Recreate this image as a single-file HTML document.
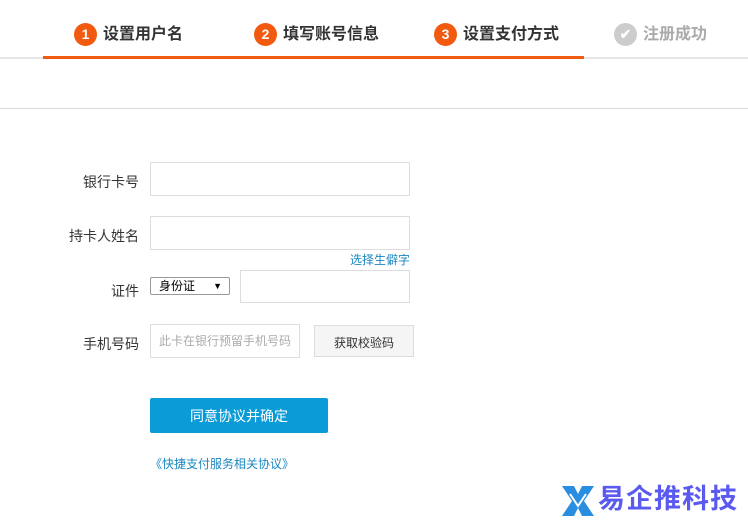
<!DOCTYPE html>
<html><head><meta charset="utf-8"><style>
*{margin:0;padding:0;box-sizing:border-box}
body{width:748px;height:529px;background:#fff;font-family:"Liberation Sans","Microsoft YaHei","Noto Sans CJK SC",sans-serif;position:relative;overflow:hidden;color:#333}
.a{position:absolute}
.step{position:absolute;top:23px;height:24px;font-size:16px;font-weight:bold;line-height:24px;color:#333;white-space:nowrap}
.c{display:inline-block;width:23px;height:23px;border-radius:50%;background:#f25a0f;color:#fff;font-size:14px;text-align:center;line-height:23px;vertical-align:top;margin-right:6px}
.lbl{position:absolute;font-size:14px;color:#333;text-align:right;width:90px;left:49px}
.in{position:absolute;border:1px solid #ddd;background:#fff}
</style></head><body>
<div class="a" style="left:0;top:57px;width:748px;height:2px;background:#e6e6e6"></div>
<div class="a" style="left:43px;top:56px;width:541px;height:3px;background:#f25a0f"></div>
<div class="a" style="left:0;top:108px;width:748px;height:1px;background:#d9d9d9"></div>
<div class="step" style="left:74px"><span class="c">1</span>设置用户名</div>
<div class="step" style="left:254px"><span class="c">2</span>填写账号信息</div>
<div class="step" style="left:434px"><span class="c">3</span>设置支付方式</div>
<div class="step" style="left:614px;color:#aaa"><span class="c" style="background:#ccc">✔</span>注册成功</div>

<div class="lbl" style="top:172px">银行卡号</div>
<div class="in" style="left:150px;top:162px;width:260px;height:34px"></div>
<div class="lbl" style="top:226px">持卡人姓名</div>
<div class="in" style="left:150px;top:216px;width:260px;height:34px"></div>
<div class="a" style="left:330px;top:251px;width:80px;text-align:right;font-size:12px;color:#1a87c0">选择生僻字</div>
<div class="lbl" style="top:281px">证件</div>
<div class="a" style="left:150px;top:277px;width:80px;height:18px;border:1px solid #999;border-radius:2px;font-size:12px;line-height:16px;padding-left:8px;color:#000">身份证<span style="position:absolute;right:7px;font-size:9px">▼</span></div>
<div class="in" style="left:240px;top:270px;width:170px;height:33px"></div>
<div class="lbl" style="top:334px">手机号码</div>
<div class="in" style="left:150px;top:324px;width:150px;height:34px;font-size:12px;color:#aaa;line-height:32px;padding-left:8px;white-space:nowrap;overflow:hidden">此卡在银行预留手机号码</div>
<div class="a" style="left:314px;top:325px;width:100px;height:32px;border:1px solid #ddd;background:#f5f5f5;font-size:12px;text-align:center;line-height:34px;color:#333">获取校验码</div>
<div class="a" style="left:150px;top:398px;width:178px;height:35px;background:#0b9bd7;border-radius:2px;color:#fff;font-size:14px;text-align:center;line-height:37px">同意协议并确定</div>
<div class="a" style="left:150px;top:455px;font-size:12px;color:#1a87c0">《快捷支付服务相关协议》</div>

<svg class="a" style="left:560px;top:482px" width="36" height="38" viewBox="0 0 36 38"><path d="M2 4 L14 4 L18 12 L22 4 L34 4 L24 19 L34 34 L22 34 L18 26 L14 34 L2 34 L12 19Z" fill="#2a8ee0"/><path d="M10 12 L18 24 L26 12" stroke="#fff" stroke-width="2" fill="none"/></svg>
<div class="a" style="left:598px;top:482px;font-size:27px;font-weight:bold;color:#5a5af0;letter-spacing:1px;line-height:34px">易企推科技</div>
</body></html>
